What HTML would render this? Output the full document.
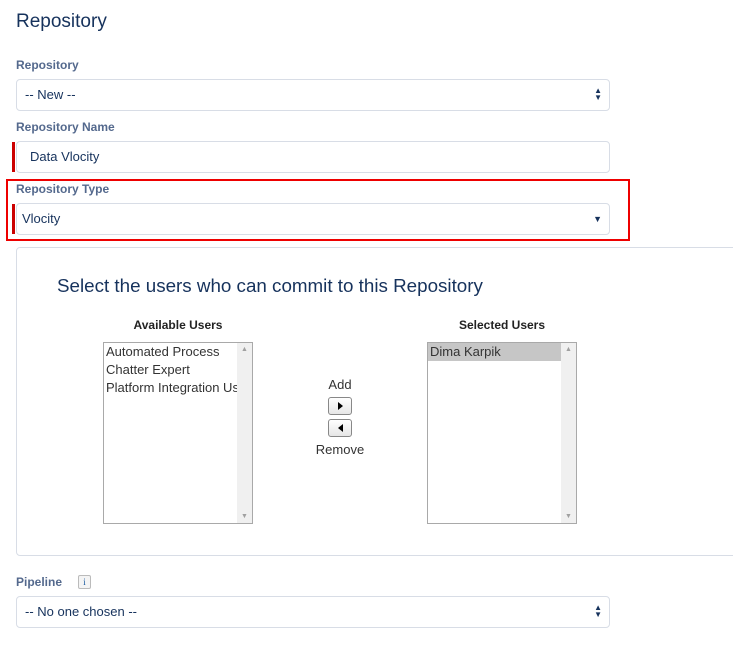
<!DOCTYPE html>
<html><head><style>
body{margin:0;width:733px;height:647px;background:#fff;font-family:"Liberation Sans",sans-serif;position:relative;overflow:hidden}
.a{position:absolute}
.lbl{font-size:12px;font-weight:bold;color:#54698d}
.inp{border:1px solid #d8dde6;border-radius:4px;box-sizing:border-box;font-size:13px;color:#16325c;line-height:30px;padding-left:8px;background:#fff}
.bar{background:#c00;width:3px}
.arr{position:absolute;right:7px;font-size:8px;line-height:7px;color:#16325c}
.list{border:1px solid #a9a9a9;box-sizing:border-box;font-size:13px;color:#333;background:#fff;overflow:hidden}
.sb{position:absolute;right:0;top:0;bottom:0;width:15px;background:#f0f0f0}
.sb i{position:absolute;left:4px;font-style:normal;font-size:7px;color:#a0a0a0}
.btn{border:1px solid #888;border-radius:3px;background:linear-gradient(#fff,#e6e6e6);box-sizing:border-box;width:24px;height:18px}
</style></head><body>
<div class="a" style="left:16px;top:11px;font-size:19px;color:#16325c">Repository</div>
<div class="a lbl" style="left:16px;top:58px">Repository</div>
<div class="a inp" style="left:16px;top:79px;width:594px;height:32px">-- New --<span class="arr" style="top:7px">▲<br>▼</span></div>
<div class="a lbl" style="left:16px;top:120px">Repository Name</div>
<div class="a bar" style="left:12px;top:142px;height:30px"></div>
<div class="a inp" style="left:16px;top:141px;width:594px;height:32px;padding-left:13px">Data Vlocity</div>
<div class="a" style="left:6px;top:179px;width:620px;height:58px;border:2px solid #e00"></div>
<div class="a lbl" style="left:16px;top:182px">Repository Type</div>
<div class="a bar" style="left:12px;top:204px;height:30px"></div>
<div class="a inp" style="left:16px;top:203px;width:594px;height:32px;padding-left:5px">Vlocity<span class="arr" style="top:12px;font-size:9px">▼</span></div>
<div class="a" style="left:16px;top:247px;width:730px;height:309px;border:1px solid #d8dde6;border-radius:4px;box-sizing:border-box"></div>
<div class="a" style="left:57px;top:275px;font-size:18.8px;color:#16325c">Select the users who can commit to this Repository</div>
<div class="a" style="left:103px;top:318px;width:150px;text-align:center;font-size:12px;font-weight:bold;color:#222">Available Users</div>
<div class="a" style="left:427px;top:318px;width:150px;text-align:center;font-size:12px;font-weight:bold;color:#222">Selected Users</div>
<div class="a list" style="left:103px;top:342px;width:150px;height:182px">
<div class="sb"><i style="top:3px">▲</i><i style="bottom:3px">▼</i></div>
<div style="padding-left:2px;line-height:18px;white-space:nowrap;width:131px;overflow:hidden">Automated Process<br>Chatter Expert<br>Platform Integration User</div></div>
<div class="a list" style="left:427px;top:342px;width:150px;height:182px">
<div class="sb"><i style="top:3px">▲</i><i style="bottom:3px">▼</i></div>
<div style="margin-left:0;width:135px;background:#c6c6c6;padding-left:2px;line-height:18px;box-sizing:border-box">Dima Karpik</div></div>
<div class="a" style="left:315px;top:377px;width:50px;text-align:center;font-size:13px;color:#333">Add</div>
<div class="a btn" style="left:328px;top:397px"><svg width="22" height="16"><path d="M9 4L14 8L9 12Z" fill="#000"/></svg></div>
<div class="a btn" style="left:328px;top:419px"><svg width="22" height="16"><path d="M14 4L9 8L14 12Z" fill="#000"/></svg></div>
<div class="a" style="left:310px;top:442px;width:60px;text-align:center;font-size:13px;color:#333">Remove</div>
<div class="a lbl" style="left:16px;top:575px">Pipeline</div>
<div class="a" style="left:78px;top:575px;width:13px;height:14px;border:1px solid #bbb;border-radius:2px;box-sizing:border-box;background:#f4f4f4;font-size:9px;color:#1a5aa0;text-align:center;line-height:12px;font-family:'Liberation Serif',serif">i</div>
<div class="a inp" style="left:16px;top:596px;width:594px;height:32px">-- No one chosen --<span class="arr" style="top:7px">▲<br>▼</span></div>
</body></html>
